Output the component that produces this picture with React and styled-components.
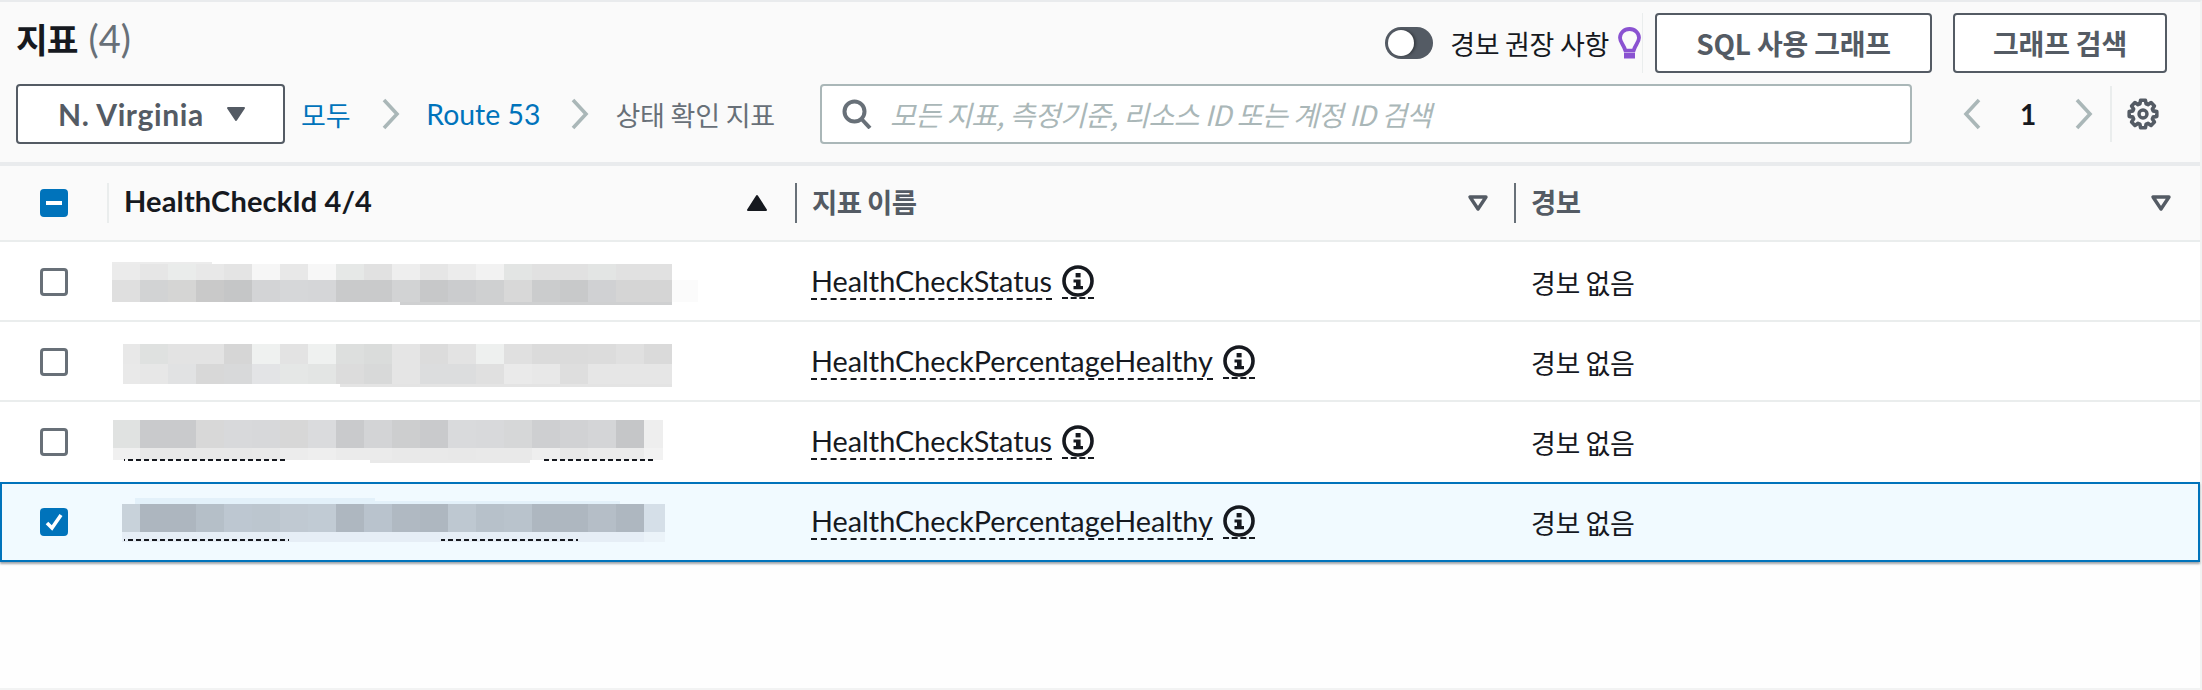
import React from "react";
import styled, { createGlobalStyle } from "styled-components";

const LATIN = `Lato, "Noto Sans CJK KR", sans-serif`;
const KOREAN = `"Noto Sans CJK KR", "Noto Sans", sans-serif`;

const GlobalStyle = createGlobalStyle`
  html, body {
    margin: 0;
    background: #fff;
  }
  * {
    box-sizing: border-box;
  }
`;

const Page = styled.div`
  width: 2202px;
  height: 690px;
  border-top: 2px solid #e9ebed;
  border-right: 2px solid #f2f3f3;
  border-bottom: 2px solid #f2f3f3;
  background: #fefefe;
  color: #16191f;
`;

const Header = styled.header`
  height: 164px;
  padding: 11px 33px 0 16px;
  background: #fafafa;
  border-bottom: 4px solid #e9ebed;
  display: flex;
  flex-direction: column;
  gap: 11px;
`;

const TitleRow = styled.div`
  height: 60px;
  display: flex;
  align-items: center;
  justify-content: space-between;
`;

const Title = styled.h1`
  margin: 0 0 11px;
  font: 700 34.5px/44px ${KOREAN};
  letter-spacing: -1px;
  display: flex;
  gap: 11px;
  color: #16191f;
  span {
    font: 400 38px/44px ${LATIN};
    color: #687078;
    letter-spacing: 0;
  }
`;

const Actions = styled.div`
  display: flex;
  align-items: center;
`;

const Toggle = styled.span`
  width: 48px;
  height: 32px;
  border-radius: 16px;
  background: #545b64;
  padding: 3px;
  display: block;
  &::before {
    content: "";
    display: block;
    width: 26px;
    height: 26px;
    border-radius: 50%;
    background: #fff;
    box-shadow: 2px 0 3px rgba(0, 0, 0, 0.35);
  }
`;

const ToggleLabel = styled.span`
  margin-left: 17px;
  font: 400 27px ${KOREAN};
  letter-spacing: -0.3px;
  white-space: nowrap;
`;

const Bulb = styled.svg`
  margin-left: 9px;
  display: block;
`;

const ActionDivider = styled.span`
  width: 1px;
  height: 60px;
  background: #eaeded;
  margin: 0 12px 0 1px;
`;

const OutlineButton = styled.button`
  height: 60px;
  width: ${(p) => p.$width}px;
  margin-left: ${(p) => p.$offset || 0}px;
  padding: 0;
  background: #fff;
  border: 2px solid #545b64;
  border-radius: 4px;
  color: #545b64;
  font: 700 28px ${KOREAN};
  letter-spacing: -0.2px;
  white-space: nowrap;
`;

const ToolRow = styled.div`
  height: 60px;
  display: flex;
  align-items: center;
`;

const RegionButton = styled.button`
  width: 269px;
  height: 60px;
  padding: 0 36px 0 40px;
  background: #fff;
  border: 2px solid #545b64;
  border-radius: 4px;
  color: #545b64;
  font: 700 30px ${LATIN};
  letter-spacing: 0.6px;
  display: flex;
  align-items: center;
  justify-content: space-between;
`;

const Breadcrumbs = styled.nav`
  width: 535px;
  padding-left: 16px;
  display: flex;
  align-items: center;
`;

const Crumb = styled.span`
  font: 400 ${(p) => (p.$latin ? 28.4 : 27)}px ${(p) => (p.$latin ? LATIN : KOREAN)};
  color: ${(p) => (p.$current ? "#687078" : "#0073bb")};
  letter-spacing: ${(p) => (p.$latin ? 0 : -0.2)}px;
  white-space: nowrap;
`;

const CrumbChevron = styled.svg`
  display: block;
  margin: 0 ${(p) => p.$after}px 0 ${(p) => p.$before}px;
`;

const SearchBox = styled.div`
  width: 1092px;
  height: 60px;
  padding-left: 20px;
  background: #fff;
  border: 2px solid #aab7b8;
  border-radius: 4px;
  display: flex;
  align-items: center;
  gap: 18px;
`;

const Placeholder = styled.span`
  font: italic 400 28px ${KOREAN};
  letter-spacing: -0.55px;
  color: #aab7b8;
  white-space: nowrap;
`;

const Pager = styled.div`
  margin-left: 51px;
  display: flex;
  align-items: center;
`;

const PageNumber = styled.span`
  width: 92px;
  text-align: center;
  font: 700 28px ${LATIN};
  color: #16191f;
`;

const PagerDivider = styled.span`
  width: 2px;
  height: 56px;
  margin: 0 15px 0 17px;
  background: #eaeded;
`;

const Columns = styled.div`
  display: grid;
  grid-template-columns: 107px 688px 719px 1fr;
  align-items: center;
`;

const HeadRow = styled(Columns)`
  height: 76px;
  background: #fafafa;
  border-bottom: 2px solid #eaeded;
`;

const HeadCell = styled.div`
  height: 40px;
  padding: 0 ${(p) => p.$right}px 0 ${(p) => p.$left}px;
  border-left: 2px solid ${(p) => (p.$muted ? "#eaeded" : "#687078")};
  display: flex;
  align-items: center;
  justify-content: space-between;
  font: 700 ${(p) => (p.$latin ? 29 : 27.5)}px/34px ${(p) => (p.$latin ? LATIN : KOREAN)};
  color: ${(p) => (p.$latin ? "#16191f" : "#545b64")};
  letter-spacing: ${(p) => (p.$latin ? 0.15 : -0.6)}px;
  span {
    margin-top: -4px;
  }
`;

const BoxCell = styled.div`
  padding-left: 40px;
  display: flex;
`;

const CheckBox = styled.span`
  width: 28px;
  height: 28px;
  border-radius: 4px;
  border: 3px solid ${(p) => (p.$on ? "#0073bb" : "#687078")};
  background: ${(p) => (p.$on ? "#0073bb" : "#fff")};
  display: flex;
  align-items: center;
  justify-content: center;
`;

const Row = styled(Columns)`
  height: 80px;
  background: ${(p) => (p.$selected ? "#f1faff" : "#fff")};
  box-shadow: ${(p) =>
    p.$selected
      ? "inset 0 0 0 2px #0073bb, 0 2px 2px rgba(84, 91, 100, 0.55)"
      : p.$plain
      ? "none"
      : "inset 0 -2px 0 #eaeded"};
`;

const Redaction = styled.svg`
  display: block;
`;

const MetricCell = styled.div`
  padding-left: 16px;
  display: flex;
  align-items: center;
  gap: 10px;
`;

const MetricName = styled.span`
  font: 400 28.8px/33px ${LATIN};
  border-bottom: 2px dashed #16191f;
  color: #16191f;
`;

const InfoLink = styled.span`
  height: 34px;
  border-bottom: 2px dashed #16191f;
  display: block;
  svg {
    display: block;
  }
`;

const AlarmCell = styled.div`
  padding-left: 17px;
  font: 400 27px ${KOREAN};
  letter-spacing: -0.4px;
`;

const Triangle = ({ up, hollow, color }) => (
  <svg width="22" height="18" viewBox="0 0 22 18" style={{ display: "block", flex: "none" }}>
    <path
      d={up ? "M11 2 L20 16 H2 Z" : "M3 3 H19 L11 15 Z"}
      fill={hollow ? "none" : color}
      stroke={color}
      strokeWidth={hollow ? 3.4 : 2}
      strokeLinejoin="round"
    />
  </svg>
);

const Chevron = ({ flip, color = "#aab7b8", width = 19, ...rest }) => (
  <svg width={width} height="32" viewBox="0 0 19 32" {...rest}>
    <path
      d={flip ? "M16 2 L3 16 L16 30" : "M3 2 L16 16 L3 30"}
      fill="none"
      stroke={color}
      strokeWidth="3.6"
    />
  </svg>
);

const InfoIcon = () => (
  <svg width="32" height="32" viewBox="0 0 32 32">
    <circle cx="16" cy="16" r="14" fill="none" stroke="#16191f" strokeWidth="3.6" />
    <rect x="13.6" y="8" width="5" height="4.4" fill="#16191f" />
    <path d="M11.5 14.4 H18.6 V21 H21 V24.2 H11.5 V21 H14 V17.4 H11.5 Z" fill="#16191f" />
  </svg>
);

// cog outline: 8 teeth around the centre of a 32 box
const gearPath = () => {
  const pts = [];
  for (let t = 0; t < 8; t++) {
    const base = (t * Math.PI) / 4;
    [
      [10.6, -0.3],
      [14, -0.17],
      [14, 0.17],
      [10.6, 0.3],
    ].forEach(([r, a]) => {
      pts.push(`${(16 + r * Math.sin(base + a)).toFixed(2)} ${(16 - r * Math.cos(base + a)).toFixed(2)}`);
    });
  }
  return `M${pts.join(" L")} Z`;
};

const GearIcon = () => (
  <svg width="32" height="32" viewBox="0 0 32 32" style={{ display: "block" }}>
    <path d={gearPath()} fill="none" stroke="#545b64" strokeWidth="3.6" strokeLinejoin="round" />
    <circle cx="16" cy="16" r="4" fill="none" stroke="#545b64" strokeWidth="3.4" />
  </svg>
);

const cols = [112, 140, 168, 196, 224, 252, 280, 308, 336, 364, 392, 420, 448, 476, 504, 532, 560, 588, 616, 644, 672];

const blurRows = [
  {
    y: 244,
    start: 112,
    end: 672,
    bands: [
      [264, 16, ["ebebeb", "e6e6e6", "eaeceb", "e8e8e8", "e4e4e4", "f6f6f6", "e8e8e8", "f7f7f7", "e6e8e7", "e1e1e1", "eeeeee", "e6e6e6", "ececec", "f2f2f2", "e3e5e4", "e1e1e1", "e1e1e1", "e3e5e4", "e1e1e1", "e1e1e1"]],
      [280, 22, ["dfdfdf", "d2d3d4", "d5d5d4", "c9c9c9", "c5c6c7", "d3d4d6", "d6d7d9", "d5d6d8", "c9cacb", "c9cacb", "d2d3d4", "c7c8c9", "cbccce", "cfd0d1", "d8d8d8", "cbcccd", "c8c9ca", "d0d1d3", "d5d5d5", "d5d5d5"]],
    ],
    fringe: [[112, 262, 100, 2, "ececec"], [400, 302, 272, 3, "cfd0d1"], [672, 280, 26, 22, "fbfbfb"]],
  },
  {
    y: 324,
    start: 123,
    end: 672,
    bands: [
      [344, 20, ["e8e8e8", "dfe1e0", "e3e3e3", "e3e3e3", "d6d6d6", "eff1f0", "e3e3e3", "eff1f0", "dddfde", "dadcdb", "e5e5e5", "dcdcdc", "e3e3e3", "eef0ef", "e0e0e0", "dbdbdb", "dbdbdb", "dcdcdc", "e0e0e0", "dadada"]],
      [364, 20, ["e9e9e9", "e7e7e7", "e1e2e3", "d8d8d8", "d8d9da", "e3e4e6", "e5e7e6", "e3e5e4", "dcdcdc", "d8d9d9", "e5e5e5", "dcddde", "dcddde", "e0e0e0", "eaeaea", "e8e8e8", "dedede", "e6e6e6", "e6e6e6", "e6e6e6"]],
    ],
    fringe: [[340, 384, 332, 3, "e4e4e4"]],
  },
  {
    y: 404,
    start: 113,
    end: 663,
    bands: [
      [420, 28, ["e0e2e1", "c9cacc", "c9cacc", "d8d8d8", "d8d9db", "d7d8da", "d7d7d7", "dadbdd", "c9cacc", "d3d4d6", "cdcecf", "c9cacc", "d9dadc", "d8d9db", "d6d7d8", "cecfd1", "d1d2d4", "d4d5d7", "c5c6c8", "eeeeee"]],
      [448, 12, ["f0f0f0", "e8e8e8", "e8e8e8", "e8e8e8", "e8e8e8", "e9e9e9", "ececec", "eeeeee", "ebebeb", "ebebeb", "e9e9e9", "e9e9e9", "e8e8e8", "e9e9e9", "e9e9e9", "eeeeee", "e8e8e8", "ebebeb", "ebebeb", "f2f2f2"]],
    ],
    fringe: [[370, 460, 160, 3, "e9e9e9"], [124, 459, 161, 2, "dash"], [543, 459, 112, 2, "dash"]],
  },
  {
    y: 484,
    start: 122,
    end: 665,
    bands: [
      [504, 28, ["c8d2da", "adb6bf", "adb6bf", "b5bfc8", "bdc7d1", "bcc6cf", "c0c9d2", "c1cbd4", "aeb7c0", "b9c3cd", "b0b9c2", "aeb7c0", "bec8d1", "b7c1ca", "b9c3cc", "aeb7c0", "aeb7c0", "b5bec7", "aeb7c0", "d5dfe8"]],
      [532, 10, ["e6eef6", "e6eef6", "e6eef6", "e6eef6", "e6eef6", "e6eef6", "e6eef6", "e6eef6", "e6eef6", "e6eef6", "e6eef6", "e6eef6", "e6eef6", "e6eef6", "e6eef6", "e6eef6", "e6eef6", "e6eef6", "e6eef6", "ebf3f9"]],
    ],
    fringe: [[135, 498, 240, 6, "e3f1fa"], [370, 501, 250, 3, "e3f1fa"], [124, 539, 165, 2, "dash"], [441, 539, 137, 2, "dash"]],
  },
];

const BlurPatch = ({ y, start, end, bands, fringe }) => (
  <Redaction width="600" height="76" viewBox={`107 ${y} 600 76`}>
    <defs>
      <pattern id={`dash-${y}`} width="8" height="2" patternUnits="userSpaceOnUse">
        <rect width="5" height="2" fill="#16191f" />
      </pattern>
    </defs>
    {fringe
      .filter((f) => f[4] !== "dash")
      .map(([x, fy, w, h, c]) => (
        <rect key={`${x}-${fy}`} x={x} y={fy} width={w} height={h} fill={`#${c}`} />
      ))}
    {bands.map(([by, bh, colors]) =>
      colors.map((c, i) => {
        const x = Math.max(cols[i], start);
        const x2 = Math.min(cols[i + 1], end);
        return <rect key={`${by}-${i}`} x={x} y={by} width={x2 - x} height={bh} fill={`#${c}`} />;
      })
    )}
    {fringe
      .filter((f) => f[4] === "dash")
      .map(([x, fy, w, h]) => (
        <rect key={`${x}-${fy}`} x={x} y={fy} width={w} height={h} fill={`url(#dash-${y})`} />
      ))}
  </Redaction>
);

const rows = [
  { metric: "HealthCheckStatus" },
  { metric: "HealthCheckPercentageHealthy" },
  { metric: "HealthCheckStatus", plain: true },
  { metric: "HealthCheckPercentageHealthy", selected: true },
];

export default function App() {
  return (
    <Page>
      <GlobalStyle />
      <Header>
        <TitleRow>
          <Title>
            지표 <span>(4)</span>
          </Title>
          <Actions>
            <Toggle />
            <ToggleLabel>경보 권장 사항</ToggleLabel>
            <Bulb width="23" height="32" viewBox="0 0 23 32">
              <path
                d="M11.5 2 C6 2 2 6 2 10.8 C2 15 5.5 17.5 7.4 23.6 H15.6 C17.5 17.5 21 15 21 10.8 C21 6 17 2 11.5 2 Z"
                fill="none"
                stroke="#8a52d1"
                strokeWidth="3.8"
              />
              <rect x="6" y="26" width="11" height="5.5" fill="#8a52d1" />
            </Bulb>
            <ActionDivider />
            <OutlineButton $width={277}>SQL 사용 그래프</OutlineButton>
            <OutlineButton $width={214} $offset={21}>그래프 검색</OutlineButton>
          </Actions>
        </TitleRow>
        <ToolRow>
          <RegionButton>
            N. Virginia
            <Triangle color="#545b64" />
          </RegionButton>
          <Breadcrumbs>
            <Crumb>모두</Crumb>
            <CrumbChevron as={Chevron} $before={31} $after={26} />
            <Crumb $latin>Route 53</Crumb>
            <CrumbChevron as={Chevron} $before={30} $after={26} />
            <Crumb $current>상태 확인 지표</Crumb>
          </Breadcrumbs>
          <SearchBox>
            <svg width="30" height="30" viewBox="0 0 30 30" style={{ display: "block" }}>
              <circle cx="12.5" cy="12.5" r="10" fill="none" stroke="#687078" strokeWidth="4" />
              <path d="M19.5 20 L28 29" stroke="#687078" strokeWidth="4" fill="none" />
            </svg>
            <Placeholder>모든 지표, 측정기준, 리소스 ID 또는 계정 ID 검색</Placeholder>
          </SearchBox>
          <Pager>
            <Chevron flip />
            <PageNumber>1</PageNumber>
            <Chevron />
            <PagerDivider />
            <GearIcon />
          </Pager>
        </ToolRow>
      </Header>

      <HeadRow>
        <BoxCell>
          <CheckBox $on>
            <svg width="16" height="4" viewBox="0 0 16 4">
              <rect width="16" height="4" fill="#fff" />
            </svg>
          </CheckBox>
        </BoxCell>
        <HeadCell $muted $latin $left={15} $right={27}>
          <span>HealthCheckId 4/4</span>
          <Triangle up color="#16191f" />
        </HeadCell>
        <HeadCell $left={15} $right={25}>
          <span>지표 이름</span>
          <Triangle hollow color="#545b64" />
        </HeadCell>
        <HeadCell $left={15} $right={28}>
          <span>경보</span>
          <Triangle hollow color="#545b64" />
        </HeadCell>
      </HeadRow>

      {rows.map((row, i) => (
        <Row key={i} $selected={row.selected} $plain={row.plain}>
          <BoxCell>
            <CheckBox $on={row.selected}>
              {row.selected && (
                <svg width="20" height="20" viewBox="0 0 20 20">
                  <path d="M3 11 L8 16 L17 3" fill="none" stroke="#fff" strokeWidth="3.6" />
                </svg>
              )}
            </CheckBox>
          </BoxCell>
          <BlurPatch {...blurRows[i]} />
          <MetricCell>
            <MetricName>{row.metric}</MetricName>
            <InfoLink>
              <InfoIcon />
            </InfoLink>
          </MetricCell>
          <AlarmCell>경보 없음</AlarmCell>
        </Row>
      ))}
    </Page>
  );
}
